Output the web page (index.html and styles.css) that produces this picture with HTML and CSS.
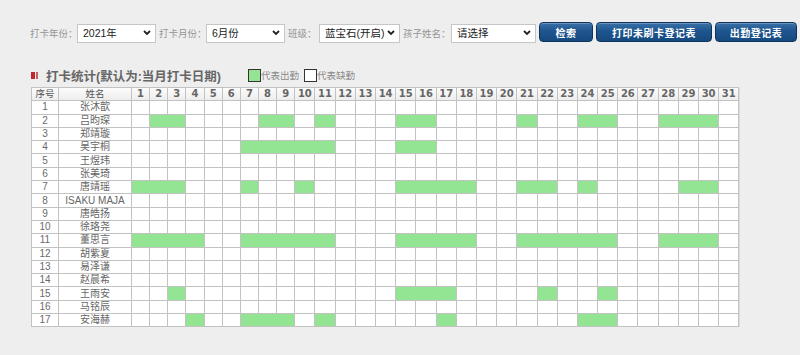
FILE: index.html
```html
<!DOCTYPE html>
<html lang="zh-CN">
<head>
    <meta charset="UTF-8">
    <meta name="viewport" content="width=device-width, initial-scale=1.0">
    <title>打卡统计</title>
    <link rel="stylesheet" href="styles.css">
</head>
<body>
    <form class="toolbar">
        <label class="lbl lbl-year">打卡年份：</label>
        <span class="sel sel-year">
            <select><option>2021年</option></select>
            <svg class="chev" viewBox="0 0 8 5"><polyline points="1,1 4,4 7,1"/></svg>
        </span>
        <label class="lbl lbl-month">打卡月份：</label>
        <span class="sel sel-month">
            <select><option>6月份</option></select>
            <svg class="chev" viewBox="0 0 8 5"><polyline points="1,1 4,4 7,1"/></svg>
        </span>
        <label class="lbl lbl-class">班级：</label>
        <span class="sel sel-class">
            <select><option>蓝宝石(开启)</option></select>
            <svg class="chev" viewBox="0 0 8 5"><polyline points="1,1 4,4 7,1"/></svg>
        </span>
        <label class="lbl lbl-child">孩子姓名：</label>
        <span class="sel sel-child">
            <select><option>请选择</option></select>
            <svg class="chev" viewBox="0 0 8 5"><polyline points="1,1 4,4 7,1"/></svg>
        </span>
        <button type="button" class="btn btn-search">检索</button>
        <button type="button" class="btn btn-print">打印未刷卡登记表</button>
        <button type="button" class="btn btn-sheet">出勤登记表</button>
    </form>

    <section class="stat">
        <div class="stat-head">
            <span class="mark"><i class="mark-red"></i><i class="mark-bar"></i></span>
            <h2>打卡统计(默认为:当月打卡日期)</h2>
            <span class="legend"><i class="box box-on"></i>代表出勤</span>
            <span class="legend"><i class="box"></i>代表缺勤</span>
        </div>
        <table class="grid" id="grid">
            <colgroup id="cols"></colgroup>
            <thead><tr id="head-row"><th>序号</th><th>姓名</th></tr></thead>
            <tbody id="body-rows"></tbody>
        </table>
    </section>

    <script>
        // 学生名单和出勤日期
        const names = ['张沐歆', '吕昀琛', '郑靖璇', '吴宇桐', '王煜玮', '张美琦', '唐靖瑶', 'ISAKU MAJA',
            '唐皓扬', '徐珞尧', '董思言', '胡紫夏', '易泽谦', '赵晨希', '王雨安', '马铭辰', '安海赫'];
        const present = {
            2: [2, 3, 8, 9, 11, 15, 16, 21, 24, 25, 28, 29, 30],
            4: [7, 8, 9, 10, 11, 15, 16],
            7: [1, 2, 3, 7, 10, 15, 16, 17, 18, 21, 22, 24, 29, 30],
            11: [1, 2, 3, 4, 7, 8, 9, 10, 11, 15, 16, 17, 18, 21, 22, 23, 24, 25, 28, 29, 30],
            15: [3, 15, 16, 17, 22, 25],
            17: [4, 7, 8, 9, 11, 17, 24, 25]
        };
        const daysInMonth = 31;

        const cols = document.getElementById('cols');
        const headRow = document.getElementById('head-row');
        const body = document.getElementById('body-rows');

        let colHtml = '<col class="c-no"><col class="c-name">';
        let headHtml = '';
        for (let d = 1; d <= daysInMonth; d++) {
            colHtml += `<col class="${d < 10 ? 'c-day' : 'c-day2'}">`;
            headHtml += `<th class="day">${d}</th>`;
        }
        cols.innerHTML = colHtml;
        headRow.insertAdjacentHTML('beforeend', headHtml);

        names.forEach((name, i) => {
            const no = i + 1;
            const on = present[no] || [];
            let row = `<tr><td>${no}</td><td class="name">${name}</td>`;
            for (let d = 1; d <= daysInMonth; d++) {
                let cls = '';
                if (on.includes(d)) {
                    cls = on.includes(d + 1) ? 'on join' : 'on';
                }
                row += `<td class="${cls}"></td>`;
            }
            body.insertAdjacentHTML('beforeend', row + '</tr>');
        });
    </script>
</body>
</html>
```

FILE: styles.css
```css
/* 基本样式 */
body {
    margin: 0;
    background-color: #eeeeee;
    font-family: "Liberation Sans", "Noto Sans CJK SC", sans-serif;
    color: #555;
}

/* 顶部筛选栏 */
.toolbar {
    display: flex;
    align-items: center;
    height: 21px;
    margin: 22px 0 0 30px;
}

.lbl {
    font-size: 9.5px;
    color: #959595;
    white-space: nowrap;
}

.lbl-year, .lbl-month { width: 47px; }
.lbl-class { width: 31px; }
.lbl-child { width: 48px; }

.sel {
    position: relative;
    display: block;
    height: 19px;
    margin-right: 3px;
}

.sel select {
    appearance: none;
    -webkit-appearance: none;
    width: 100%;
    height: 19px;
    margin: 0;
    padding: 0 0 0 5px;
    border: 1px solid #c6c6c6;
    border-radius: 0;
    background: #fff;
    font-family: "Liberation Sans", "Noto Sans CJK SC", sans-serif;
    font-size: 10.5px;
    color: #222;
    outline: none;
}

.sel-year, .sel-month { width: 79px; }
.sel-class { width: 81px; }
.sel-child { width: 85px; }

.chev {
    position: absolute;
    right: 5px;
    top: 7px;
    width: 8px;
    height: 5px;
    fill: none;
    stroke: #222;
    stroke-width: 1.8;
}

.btn {
    height: 20px;
    margin: -1px 3px 0 0;
    padding: 0;
    border: 1px solid #0f345c;
    border-radius: 4px;
    background: linear-gradient(#3a70a8, #1f558e 45%, #154a80);
    box-shadow: inset 0 1px 0 rgba(255, 255, 255, 0.25);
    color: #fff;
    font-family: "Liberation Sans", "Noto Sans CJK SC", sans-serif;
    font-size: 10px;
    font-weight: bold;
    letter-spacing: 0.5px;
    cursor: pointer;
}

.btn-search { width: 54px; }
.btn-print { width: 116px; }
.btn-sheet { width: 82px; }

/* 统计区 */
.stat {
    width: 709px;
    margin: 24px 0 0 31px;
}

.stat-head {
    display: flex;
    align-items: center;
    height: 16px;
    margin-bottom: 4px;
}

.mark {
    display: flex;
    align-items: center;
    gap: 1px;
    margin-right: 8px;
}

.mark i { display: block; height: 7px; }
.mark-red { width: 4px; background: #c3262d; }
.mark-bar { width: 2px; background: #b66; }

.stat-head h2 {
    margin: 0 27px 0 0;
    font-size: 12.5px;
    font-weight: bold;
    color: #666;
}

.legend {
    display: flex;
    align-items: center;
    margin-right: 5px;
    font-size: 9.5px;
    color: #8a8a8a;
}

.box {
    display: block;
    width: 11px;
    height: 11px;
    border: 1px solid #333;
    background: #fff;
}

.box-on { background: #93e493; }

/* 出勤表格 */
.grid {
    width: 708px;
    table-layout: fixed;
    border-spacing: 0;
    border-top: 1px solid #c2c2c2;
    border-left: 1px solid #c2c2c2;
    box-shadow: 1px 1px 0 #dcdcdc;
    background: #fff;
}

.c-no { width: 27px; }
.c-name { width: 73px; }
.c-day { width: 18.15px; }
.c-day2 { width: 20.2px; }

.grid th, .grid td {
    height: 12.3px;
    padding: 0;
    border-right: 1px solid #c2c2c2;
    border-bottom: 1px solid #c2c2c2;
    text-align: center;
    line-height: 12px;
    font-size: 10px;
    font-weight: normal;
    color: #6a6a6a;
    white-space: nowrap;
    overflow: hidden;
}

.grid td.name { color: #666; }

.grid th {
    background: linear-gradient(#fcfcfc, #ededed);
    font-size: 9.5px;
    color: #555;
}

.grid th.day {
    font-family: "DejaVu Sans", sans-serif;
    font-size: 10px;
    font-weight: bold;
    color: #666;
}

.grid td.on { background: #93e493; }
.grid td.join { border-right-color: #93e493; }
```
